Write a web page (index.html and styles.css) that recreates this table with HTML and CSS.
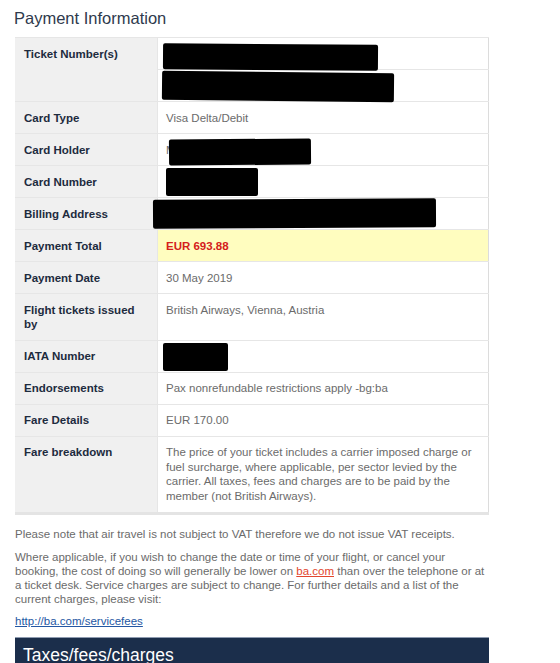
FILE: index.html
```html
<!DOCTYPE html>
<html lang="en">
<head>
  <meta charset="UTF-8">
  <meta name="viewport" content="width=device-width, initial-scale=1.0">
  <title>Payment Information</title>
  <link rel="stylesheet" href="styles.css">
</head>
<body>

  <div class="page">
    <h2 class="section-title">Payment Information</h2>

    <table class="info-table">
      <tr>
        <th rowspan="2">Ticket Number(s)</th>
        <td class="redacted"><span class="redact r-ticket1"></span>&nbsp;</td>
      </tr>
      <tr>
        <td class="redacted"><span class="redact r-ticket2"></span>&nbsp;</td>
      </tr>
      <tr>
        <th>Card Type</th>
        <td>Visa Delta/Debit</td>
      </tr>
      <tr>
        <th>Card Holder</th>
        <td class="redacted">M<span class="redact r-holder"></span></td>
      </tr>
      <tr>
        <th>Card Number</th>
        <td class="redacted"><span class="redact r-card"></span>&nbsp;</td>
      </tr>
      <tr>
        <th>Billing Address</th>
        <td class="redacted"><span class="redact r-billing"></span>&nbsp;</td>
      </tr>
      <tr class="total">
        <th>Payment Total</th>
        <td>EUR 693.88</td>
      </tr>
      <tr>
        <th>Payment Date</th>
        <td>30 May 2019</td>
      </tr>
      <tr>
        <th>Flight tickets issued by</th>
        <td>British Airways, Vienna, Austria</td>
      </tr>
      <tr>
        <th>IATA Number</th>
        <td class="redacted"><span class="redact r-iata"></span>&nbsp;</td>
      </tr>
      <tr>
        <th>Endorsements</th>
        <td>Pax nonrefundable restrictions apply -bg:ba</td>
      </tr>
      <tr>
        <th>Fare Details</th>
        <td>EUR 170.00</td>
      </tr>
      <tr class="last">
        <th>Fare breakdown</th>
        <td>The price of your ticket includes a carrier imposed charge or fuel surcharge, where applicable, per sector levied by the carrier. All taxes, fees and charges are to be paid by the member (not British Airways).</td>
      </tr>
    </table>

    <p class="note">Please note that air travel is not subject to VAT therefore we do not issue VAT receipts.</p>
    <p class="note">Where applicable, if you wish to change the date or time of your flight, or cancel your booking, the cost of doing so will generally be lower on <a href="#" class="inline-link">ba.com</a> than over the telephone or at a ticket desk. Service charges are subject to change. For further details and a list of the current charges, please visit:</p>
    <p class="note link-line"><a href="#" class="fees-link">http://ba.com/servicefees</a></p>

    <div class="section-bar">Taxes/fees/charges</div>
  </div>

</body>
</html>
```

FILE: styles.css
```css
body {
  font-family: "Liberation Sans", Arial, sans-serif;
  background-color: #ffffff;
  margin: 0;
}

.page {
  width: 474px;
  margin-left: 15px;
  padding-top: 8px;
}

.section-title {
  font-size: 16.5px;
  font-weight: normal;
  color: #2f3a4d;
  margin: 0 0 9px -1px;
  line-height: 20px;
}

.info-table {
  width: 100%;
  border-collapse: collapse;
  border-right: 1px solid #dcdcdc;
  border-bottom: 3px solid #e4e4e4;
  font-size: 11.5px;
  line-height: 14.5px;
}

.info-table th,
.info-table td {
  text-align: left;
  vertical-align: top;
  padding: 8.5px 8px 8px 8px;
  border-top: 1px solid #e6e6e6;
}

.info-table th {
  width: 125px;
  padding-left: 9px;
  background-color: #f0f0f0;
  color: #1d2b3e;
  font-weight: bold;
  border-right: 1px solid #e6e6e6;
}

.info-table td {
  color: #6b6b6b;
}

.info-table tr.total td {
  background-color: #fffdbf;
  color: #d4201b;
  font-weight: bold;
}

.info-table tr.last td {
  padding-bottom: 9px;
}

.redacted {
  position: relative;
}

.redact {
  position: absolute;
  background-color: #000;
  border-radius: 2px;
}

.r-ticket1 {
  left: 5px;
  top: 6px;
  width: 215px;
  height: 26px;
  transform: rotate(0.4deg);
}

.r-ticket2 {
  left: 4px;
  top: 2px;
  width: 232px;
  height: 29px;
  transform: rotate(0.6deg);
}

.r-holder {
  left: 11px;
  top: 5px;
  width: 142px;
  height: 26px;
  transform: rotate(-0.5deg);
}

.r-card {
  left: 8px;
  top: 2px;
  width: 92px;
  height: 28px;
}

.r-billing {
  left: -5px;
  top: 1px;
  width: 283px;
  height: 29px;
  transform: rotate(-0.3deg);
}

.r-iata {
  left: 5px;
  top: 2px;
  width: 65px;
  height: 28px;
}

.note {
  font-size: 11.5px;
  line-height: 14px;
  color: #6b6b6b;
  margin: 12px 0 0 0;
}

.note + .note {
  margin-top: 9px;
}

.note.link-line {
  margin-top: 8px;
}

.inline-link {
  color: #e2462e;
  text-decoration: underline;
}

.fees-link {
  color: #2457a3;
  text-decoration: underline;
}

.section-bar {
  margin-top: 9px;
  background-color: #1b2e4b;
  border-top: 1px solid #8e9bb0;
  color: #ffffff;
  font-size: 17.5px;
  line-height: 20px;
  padding: 7px 8px;
}
```
